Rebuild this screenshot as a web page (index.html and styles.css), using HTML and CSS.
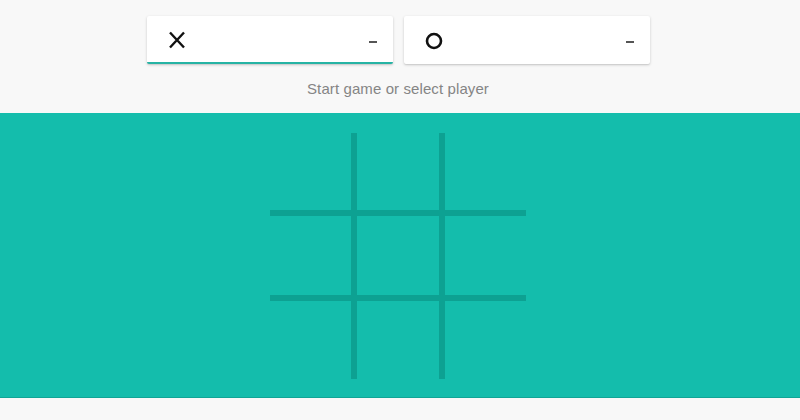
FILE: index.html
```html
<!DOCTYPE html>
<html>
<head>
<meta charset="utf-8">
<link rel="stylesheet" href="styles.css">
</head>
<body>
<div class="top">
  <div class="players">
    <div class="player active">
      <svg class="mark" viewBox="0 0 20 20" width="20" height="20"><path d="M3 2.5 L17 17.5 M17 2.5 L3 17.5" stroke="#111" stroke-width="2.4" fill="none"/></svg>
      <span class="score"></span>
    </div>
    <div class="player">
      <svg class="mark" viewBox="0 0 20 20" width="20" height="20"><circle cx="10" cy="10" r="7" stroke="#111" stroke-width="2.6" fill="none"/></svg>
      <span class="score"></span>
    </div>
  </div>
  <p class="status">Start game or select player</p>
</div>
<div class="board-area">
  <div class="board">
    <div class="cell"></div><div class="cell"></div><div class="cell"></div>
    <div class="cell"></div><div class="cell"></div><div class="cell"></div>
    <div class="cell"></div><div class="cell"></div><div class="cell"></div>
  </div>
</div>
</body>
</html>
```
FILE: styles.css
```css
html, body {
  margin: 0;
  padding: 0;
  background: #f8f8f8;
  font-family: "Liberation Sans", Arial, sans-serif;
}
.top {
  padding-top: 16px;
}
.players {
  display: flex;
  justify-content: center;
  gap: 11px;
  padding-right: 4px;
}
.player {
  box-sizing: border-box;
  width: 246px;
  height: 48px;
  background: #fff;
  border-radius: 2px;
  box-shadow: 0 1px 3px rgba(0,0,0,0.18), 0 1px 1px rgba(0,0,0,0.06);
  display: flex;
  align-items: center;
  justify-content: space-between;
  padding: 1px 16px 0 20px;
}
.player.active {
  border-bottom: 2px solid #26b3a4;
  padding-top: 2px;
}
.mark {
  display: block;
}
.score {
  display: block;
  width: 8px;
  height: 2px;
  background: #555;
  margin-top: 3px;
}
.status {
  margin: 0;
  padding: 15px 4px 14px 0;
  text-align: center;
  font-size: 15px;
  letter-spacing: 0.1px;
  line-height: 20px;
  color: #858585;
}
.board-area {
  background: #14bdac;
  height: 264px;
  border-bottom: 1px solid #10a596;
  padding-top: 20px;
  display: flex;
  justify-content: center;
  padding-right: 4px;
  align-items: flex-start;
}
.board {
  display: grid;
  grid-template-columns: 81px 82px 81px;
  grid-template-rows: 77px 79px 78px;
  gap: 6px;
  background: #0da192;
}
.cell {
  background: #14bdac;
}
```
